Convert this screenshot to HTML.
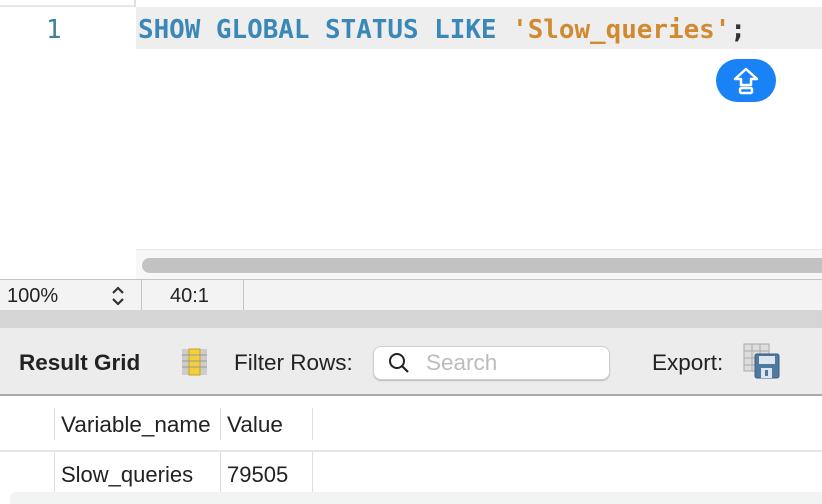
<!DOCTYPE html>
<html><head><style>
*{margin:0;padding:0;box-sizing:border-box}
body{width:822px;height:504px;overflow:hidden;background:#fff;font-family:"Liberation Sans",sans-serif;position:relative}
.a{position:absolute}
.mono{font-family:"DejaVu Sans Mono","Liberation Mono",monospace;font-weight:bold;font-size:25.9px}
</style></head><body>
<div class="a" style="left:0;top:5px;width:135px;height:2px;background:#e8e8e8"></div>
<div class="a" style="left:134px;top:0;width:2px;height:7px;background:#e0e0e0"></div>
<div class="a" style="left:136px;top:7px;width:686px;height:42px;background:#eeeeee"></div>
<div class="a mono" style="left:46px;top:15px;color:#3f8098;font-weight:normal">1</div>
<div class="a mono" style="left:138px;top:15px;color:#3a88b8;white-space:pre;letter-spacing:0">SHOW GLOBAL STATUS LIKE <span style="color:#d28a30">'Slow_queries'</span><span style="color:#333">;</span></div>
<div class="a" style="left:716px;top:59px;width:60px;height:43px;border-radius:22px;background:#1a82f7"></div>
<svg class="a" style="left:716px;top:59px" width="60" height="43" viewBox="0 0 60 43"><path d="M30 10 L41 20 H35 V26 H25 V20 H19 Z" fill="none" stroke="#fff" stroke-width="2.5" stroke-linejoin="round"/><rect x="24" y="29" width="12" height="5" rx="1.5" fill="none" stroke="#fff" stroke-width="2.5"/></svg>
<div class="a" style="left:136px;top:249px;width:686px;height:30px;background:#f7f7f7;border-top:1px solid #e6e6e6"></div>
<div class="a" style="left:142px;top:258px;width:690px;height:15px;border-radius:8px;background:#c2c2c2"></div>
<div class="a" style="left:0;top:279px;width:822px;height:31px;background:#f3f3f3;border-top:1px solid #c4c4c4"></div>
<div class="a" style="left:7px;top:285px;font-size:20px;color:#222">100%</div>
<svg class="a" style="left:109px;top:285px" width="18" height="22"><path d="M4 8 L9 3 L14 8 M4 14 L9 19 L14 14" fill="none" stroke="#333" stroke-width="2.2"/></svg>
<div class="a" style="left:141px;top:280px;width:1px;height:30px;background:#c4c4c4"></div>
<div class="a" style="left:170px;top:285px;font-size:20px;color:#222">40:1</div>
<div class="a" style="left:243px;top:280px;width:1px;height:30px;background:#c4c4c4"></div>
<div class="a" style="left:0;top:310px;width:822px;height:18px;background:#d5d5d5"></div>
<div class="a" style="left:0;top:328px;width:822px;height:66px;background:#ececec"></div>
<div class="a" style="left:0;top:394px;width:822px;height:2px;background:#a9a9a9"></div>
<div class="a" style="left:19px;top:350px;font-size:22.5px;font-weight:bold;color:#222">Result Grid</div>
<svg class="a" style="left:181px;top:348px" width="27" height="28"><rect x="1" y="1" width="25" height="26" fill="#ccc"/><rect x="8" y="1" width="11" height="26" fill="#f2cf3c" stroke="#c9a020"/><path d="M1 7H26M1 13H26M1 19H26" stroke="#999"/></svg>
<div class="a" style="left:234px;top:350px;font-size:22.5px;color:#222">Filter Rows:</div>
<div class="a" style="left:373px;top:346px;width:237px;height:34px;background:#fff;border:1px solid #d0d0d0;border-radius:8px;box-shadow:0 1px 1px #bbb"></div>
<svg class="a" style="left:387px;top:351px" width="24" height="24"><circle cx="10" cy="10" r="7" fill="none" stroke="#222" stroke-width="2"/><path d="M15 15 L21 21" stroke="#222" stroke-width="2.2"/></svg>
<div class="a" style="left:426px;top:350px;font-size:22.5px;color:#bcbcbc">Search</div>
<div class="a" style="left:652px;top:350px;font-size:22.5px;color:#222">Export:</div>
<svg class="a" style="left:743px;top:343px" width="38" height="36"><rect x="1" y="1" width="25" height="27" fill="#ddd" stroke="#aaa"/><path d="M1 8H26M1 15H26M1 22H26M9 1V28M17 1V28" stroke="#aaa"/><rect x="12" y="11" width="24" height="24" rx="2" fill="#4f7aa0" stroke="#3a5f80"/><rect x="16" y="13" width="16" height="8" fill="#dde6ee"/><rect x="18" y="25" width="11" height="10" fill="#dde6ee"/><rect x="22" y="27" width="3" height="6" fill="#4f7aa0"/></svg>
<div class="a" style="left:54px;top:408px;width:1px;height:32px;background:#ddd"></div>
<div class="a" style="left:220px;top:408px;width:1px;height:32px;background:#ddd"></div>
<div class="a" style="left:312px;top:408px;width:1px;height:32px;background:#ddd"></div>
<div class="a" style="left:61px;top:412px;font-size:22.5px;color:#222">Variable_name</div>
<div class="a" style="left:227px;top:412px;font-size:22.5px;color:#222">Value</div>
<div class="a" style="left:0;top:450px;width:822px;height:2px;background:#e6e6e6"></div>
<div class="a" style="left:54px;top:452px;width:1px;height:52px;background:#ddd"></div>
<div class="a" style="left:220px;top:452px;width:1px;height:52px;background:#ddd"></div>
<div class="a" style="left:312px;top:452px;width:1px;height:52px;background:#ddd"></div>
<div class="a" style="left:61px;top:462px;font-size:22px;color:#222">Slow_queries</div>
<div class="a" style="left:227px;top:462px;font-size:22px;color:#222">79505</div>
<div class="a" style="left:10px;top:492px;width:812px;height:12px;background:#f2f3f3;border-radius:6px 0 0 0"></div>
</body></html>
